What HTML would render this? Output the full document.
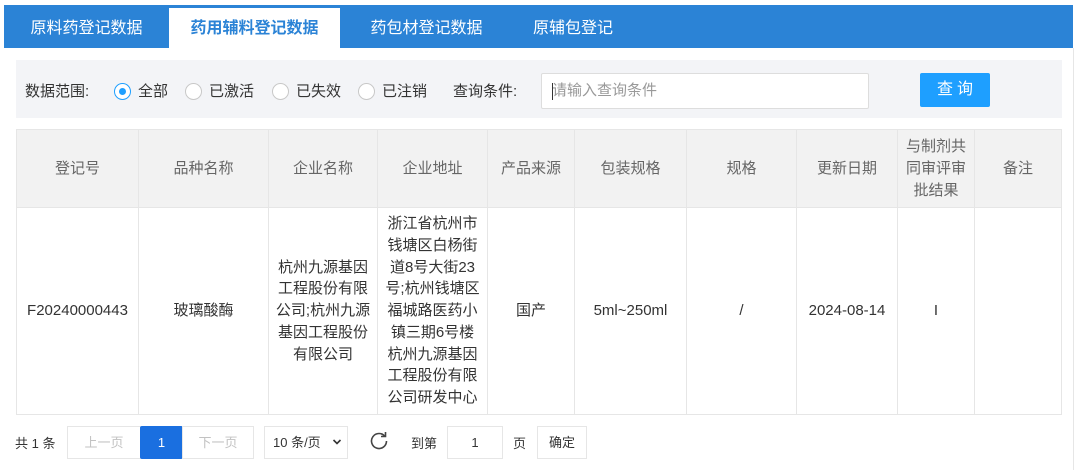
<!DOCTYPE html>
<html><head><meta charset="utf-8"><style>
*{box-sizing:border-box;margin:0;padding:0}
body{width:1080px;height:470px;background:#fff;font-family:"Liberation Sans","Noto Sans CJK SC",sans-serif;color:#333;position:relative;overflow:hidden}
.abs{position:absolute}
.bar{left:4px;top:5px;width:1069px;height:43px;background:#2b83d6}
.tab{top:8px;height:40px;line-height:42px;color:#fff;font-size:16px;text-align:center}
.tab.act{background:#fff;color:#2b83d6;font-weight:bold}
.side{left:1073px;top:48px;width:1px;height:422px;background:#e6e6e6}
.panel{left:16px;top:60px;width:1046px;height:58px;background:#f3f4f7}
.lbl{top:81px;font-size:15px;color:#333;line-height:22px}
.radio{top:83px;width:17px;height:17px;border:1px solid #c8c8c8;border-radius:50%;background:#fff}
.radio.on{border-color:#1e9fff}
.radio.on:after{content:"";position:absolute;left:4px;top:4px;width:7px;height:7px;border-radius:50%;background:#1e9fff}
.input{left:541px;top:73px;width:328px;height:36px;border:1px solid #ddd;border-radius:2px;background:#fff;font-size:15px;color:#999;line-height:34px;padding-left:10px}
.input:before{content:"";position:absolute;left:10px;top:9px;width:1px;height:17px;background:#333}
.btn{left:920px;top:73px;width:70px;height:34px;background:#1e9fff;border-radius:2px;color:#fff;font-size:16px;text-align:center;line-height:34px;letter-spacing:4px;padding-left:4px}
table{position:absolute;left:16px;top:129px;border-collapse:collapse;width:1046px}
td,th{border:1px solid #e6e6e6;text-align:center;font-size:15px;font-weight:normal}
th{background:#f2f2f2;color:#666;height:78px;line-height:22px}
td{height:207px;line-height:21.7px;color:#333}
.pg{top:426px;height:33px;border:1px solid #e6e6e6;font-size:13px;text-align:center;line-height:31px;background:#fff}
</style></head><body>
<div class="abs bar"></div>
<div class="abs tab" style="left:4px;width:165px">原料药登记数据</div>
<div class="abs tab act" style="left:169px;width:171px">药用辅料登记数据</div>
<div class="abs tab" style="left:340px;width:173px">药包材登记数据</div>
<div class="abs tab" style="left:513px;width:120px">原辅包登记</div>
<div class="abs side"></div>
<div class="abs panel"></div>
<div class="abs lbl" style="left:25px">数据范围:</div>
<div class="abs radio on" style="left:114px"></div><div class="abs lbl" style="left:138px">全部</div>
<div class="abs radio" style="left:185px"></div><div class="abs lbl" style="left:209px">已激活</div>
<div class="abs radio" style="left:272px"></div><div class="abs lbl" style="left:296px">已失效</div>
<div class="abs radio" style="left:358px"></div><div class="abs lbl" style="left:382px">已注销</div>
<div class="abs lbl" style="left:453px">查询条件:</div>
<div class="abs input">请输入查询条件</div>
<div class="abs btn">查询</div>
<table>
<tr><th style="width:122px">登记号</th><th style="width:130px">品种名称</th><th style="width:109px">企业名称</th><th style="width:110px">企业地址</th><th style="width:87px">产品来源</th><th style="width:112px">包装规格</th><th style="width:110px">规格</th><th style="width:101px">更新日期</th><th style="width:77px">与制剂共<br>同审评审<br>批结果</th><th>备注</th></tr>
<tr><td>F20240000443</td><td>玻璃酸酶</td><td>杭州九源基因<br>工程股份有限<br>公司;杭州九源<br>基因工程股份<br>有限公司</td><td>浙江省杭州市<br>钱塘区白杨街<br>道8号大街23<br>号;杭州钱塘区<br>福城路医药小<br>镇三期6号楼<br>杭州九源基因<br>工程股份有限<br>公司研发中心</td><td>国产</td><td>5ml~250ml</td><td>/</td><td>2024-08-14</td><td>I</td><td></td></tr>
</table>
<div class="abs" style="left:15px;top:433px;font-size:13px">共 1 条</div>
<div class="abs pg" style="left:67px;width:74px;color:#c2c2c2">上一页</div>
<div class="abs pg" style="left:140px;width:43px;background:#1a6fe0;border-color:#1a6fe0;color:#fff;border-radius:2px">1</div>
<div class="abs pg" style="left:182px;width:72px;color:#c2c2c2">下一页</div>
<div class="abs pg" style="left:264px;width:84px;color:#333;text-align:left;padding-left:8px">10 条/页</div>
<svg class="abs" style="left:332px;top:438px" width="10" height="8" viewBox="0 0 10 8"><path d="M1.5 2l3.5 3.5L8.5 2" fill="none" stroke="#333" stroke-width="1.6"/></svg>
<svg class="abs" style="left:368px;top:430px" width="22" height="22" viewBox="0 0 22 22"><path d="M17 6.5A7.5 7.5 0 1 0 18.5 11" fill="none" stroke="#444" stroke-width="1.6"/><path d="M13 6.5h4.5V2" fill="none" stroke="#444" stroke-width="1.6"/></svg>
<div class="abs" style="left:411px;top:433px;font-size:13px">到第</div>
<div class="abs pg" style="left:447px;width:56px;color:#333">1</div>
<div class="abs" style="left:513px;top:433px;font-size:13px">页</div>
<div class="abs pg" style="left:537px;width:50px;color:#333">确定</div>
</body></html>
